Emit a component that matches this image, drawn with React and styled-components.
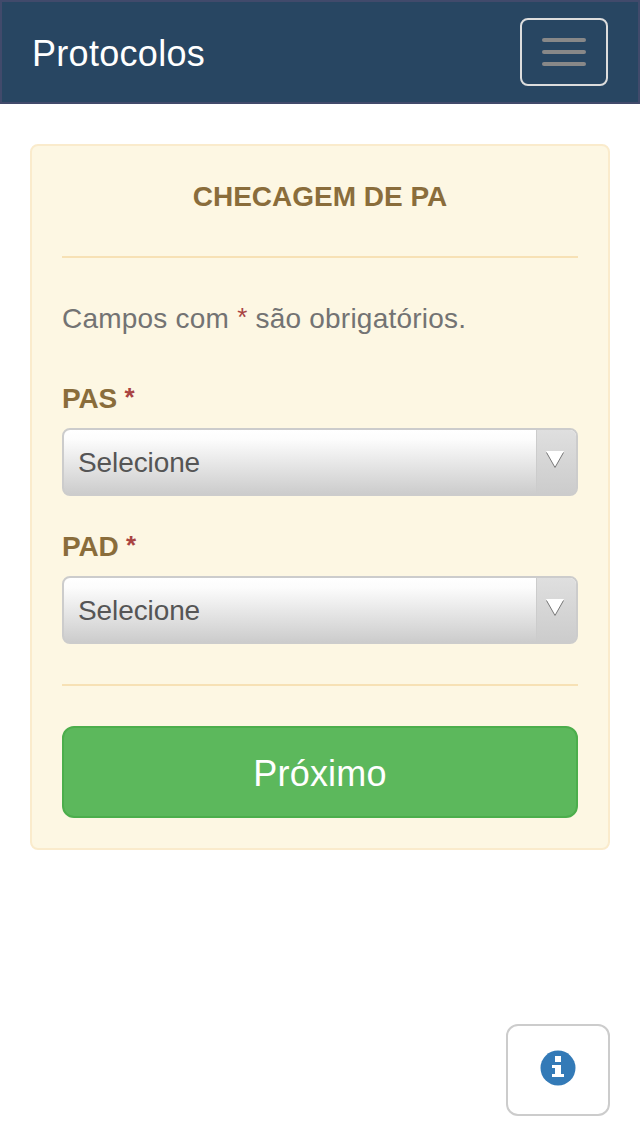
import React from "react";
import styled, { createGlobalStyle } from "styled-components";

const GlobalStyle = createGlobalStyle`
  * {
    box-sizing: border-box;
  }
  body {
    margin: 0;
    background: #fff;
    font-family: "Liberation Sans", Arial, sans-serif;
    font-size: 28px;
    line-height: 42px;
  }
`;

const Page = styled.div`
  display: flex;
  flex-direction: column;
  width: 640px;
  height: 1136px;
`;

const Navbar = styled.nav`
  display: flex;
  align-items: center;
  justify-content: space-between;
  height: 104px;
  padding: 0 30px;
  background-color: #284662;
  border: 2px solid #414a6b;
`;

const Brand = styled.a`
  color: #fff;
  font-size: 36px;
  letter-spacing: 0.3px;
  padding-top: 4px;
  text-decoration: none;
`;

const Toggle = styled.button`
  display: flex;
  flex-direction: column;
  align-items: center;
  gap: 8px;
  width: 88px;
  height: 68px;
  padding: 18px 0;
  background: transparent;
  border: 2px solid #ddd;
  border-radius: 8px;
`;

const Bar = styled.span`
  width: 44px;
  height: 4px;
  border-radius: 2px;
  background-color: #888;
`;

const Panel = styled.form`
  margin: 40px 30px 0;
  padding: 30px;
  color: #8a6d3b;
  background-color: #fdf7e3;
  border: 2px solid #faebcc;
  border-radius: 8px;
`;

const Title = styled.h1`
  margin: 0;
  font-size: 28px;
  line-height: 42px;
  text-align: center;
`;

const Divider = styled.hr`
  height: 2px;
  margin: 40px 0;
  border: 0;
  background-color: #f7e1b5;

  ${Title} + & {
    margin-top: 38px;
  }
`;

const Help = styled.p`
  margin: 0 0 38px;
  color: #737373;
  letter-spacing: 0.22px;
`;

const Required = styled.span`
  color: #a94442;
  font-size: 26px;
  line-height: 1;
  vertical-align: 2px;
`;

const Field = styled.div`
  & + & {
    margin-top: 30px;
  }
`;

const Label = styled.label`
  display: block;
  margin-bottom: 8px;
  font-weight: bold;
  letter-spacing: -0.2px;
`;

const Select = styled.div`
  display: flex;
  height: 68px;
  overflow: hidden;
  color: #555;
  border: 2px solid #ccc;
  border-radius: 8px;
  background: linear-gradient(#fff 0%, #fcfcfc 15%, #ccc 100%);
`;

const Value = styled.span`
  flex: 1;
  padding: 12px 14px;
  letter-spacing: -0.1px;
`;

const Arrow = styled.span`
  width: 40px;
  padding: 21px 0 0 8px;
  line-height: 0;
  border-left: 1px solid #ccc;
  background: linear-gradient(#dfdfdf, #ccc);
`;

const Submit = styled.button`
  display: block;
  width: 100%;
  height: 92px;
  padding: 4px 0 0;
  color: #fff;
  font-family: inherit;
  font-size: 36px;
  letter-spacing: 0.2px;
  background-color: #5cb85c;
  border: 2px solid #4cae4c;
  border-radius: 12px;
`;

const InfoButton = styled.button`
  display: flex;
  align-items: center;
  justify-content: center;
  align-self: flex-end;
  width: 104px;
  height: 92px;
  margin: auto 30px 20px 0;
  padding: 0 0 4px;
  background: #fff;
  border: 2px solid #ccc;
  border-radius: 12px;
`;

const SelectField = ({ label }) => (
  <Field>
    <Label>
      {label} <Required>*</Required>
    </Label>
    <Select>
      <Value>Selecione</Value>
      <Arrow>
        <svg width="20" height="19" viewBox="0 0 20 19">
          <path d="M1 0H19L10 17Z" fill="#fff" />
          <path d="M1.5 1.5L10 16.5L18.5 1.5" fill="none" stroke="#777" />
        </svg>
      </Arrow>
    </Select>
  </Field>
);

const App = () => (
  <Page>
    <GlobalStyle />
    <Navbar>
      <Brand>Protocolos</Brand>
      <Toggle type="button">
        <Bar />
        <Bar />
        <Bar />
      </Toggle>
    </Navbar>
    <Panel>
      <Title>CHECAGEM DE PA</Title>
      <Divider />
      <Help>
        Campos com <Required>*</Required> são obrigatórios.
      </Help>
      <SelectField label="PAS" />
      <SelectField label="PAD" />
      <Divider />
      <Submit type="button">Próximo</Submit>
    </Panel>
    <InfoButton type="button">
      <svg width="36" height="36" viewBox="0 0 36 36">
        <circle cx="18" cy="18" r="17.5" fill="#337ab7" />
        <path
          d="M15 6H21V12H15ZM12 15H21V24H24V27H12V24H15V18H12Z"
          fill="#fff"
        />
      </svg>
    </InfoButton>
  </Page>
);

export default App;
